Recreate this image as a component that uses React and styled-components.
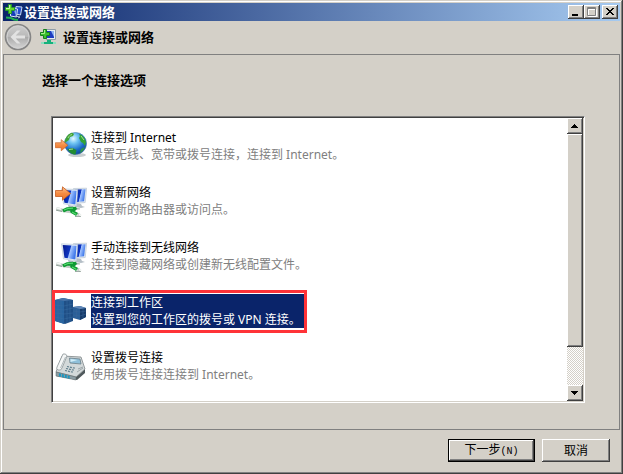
import {useState} from 'react'
import styled, {createGlobalStyle, css} from 'styled-components'

const colors = {
    face: '#d4d0c8',
    shadow: '#808080',
    darkShadow: '#404040',
    navy: '#0a246a',
    titleEnd: '#a6caf0',
    mark: '#ff3338',
}

const GlobalStyle = createGlobalStyle`
  * {
    box-sizing: border-box;
  }

  body {
    margin: 0;
    background: ${colors.face};
    color: #000000;
    font-family: "Noto Sans", "Noto Sans CJK SC", sans-serif;
    font-size: 12px;
  }

  button {
    font: inherit;
    color: inherit;
    margin: 0;
    padding: 0;
    border: 0;
  }

  svg {
    display: block;
    flex: none;
  }
`

const raised = css`
  background: ${colors.face};
  box-shadow: inset -1px -1px ${colors.darkShadow}, inset 1px 1px #ffffff,
    inset -2px -2px ${colors.shadow};
`

const WindowFrame = styled.main`
  display: flex;
  flex-direction: column;
  min-height: 100vh;
  padding: 3px;
  background: ${colors.face};
  box-shadow: inset -1px -1px ${colors.darkShadow}, inset 1px 1px ${colors.face},
    inset -2px -2px ${colors.shadow}, inset 2px 2px #ffffff;
`

const TitleBar = styled.header`
  display: flex;
  align-items: center;
  height: 18px;
  padding: 0 2px;
  background: linear-gradient(to right, ${colors.navy}, ${colors.titleEnd});
`

const TitleText = styled.h1`
  flex: 1;
  margin: 0 0 0 1px;
  color: #ffffff;
  font-size: 13px;
  line-height: 18px;
`

const CaptionButton = styled.button`
  ${raised}
  width: 16px;
  height: 14px;
  margin-left: ${({$spaced}) => ($spaced ? '2px' : '0')};
`

const WizardHeader = styled.div`
  display: flex;
  align-items: center;
  height: 33px;
  padding: 0 2px 2px 1px;
`

const BackButton = styled.button`
  background: transparent;
  margin-right: 8px;
`

const WizardTitle = styled.h2`
  margin: 0 0 0 6px;
  font-size: 13px;
  line-height: 18px;
`

const Content = styled.section`
  flex: 1;
  border: 1px solid ${colors.shadow};
  padding: 16px 34px 26px 38px;
`

const Question = styled.h3`
  margin: 0 0 27px;
  font-size: 13px;
  line-height: 18px;
`

const ListBox = styled.div`
  display: flex;
  margin-left: 9px;
  background: #ffffff;
  border: 1px solid;
  border-color: ${colors.shadow} #ffffff #ffffff ${colors.shadow};
  padding: 1px;
  box-shadow: inset 1px 1px ${colors.darkShadow}, inset -1px -1px ${colors.face};
`

const Options = styled.ul`
  flex: 1;
  display: flex;
  flex-direction: column;
  align-items: flex-start;
  gap: 21px;
  margin: 0;
  padding: 11px 2px 18px;
  list-style: none;
`

const Option = styled.button`
  position: relative;
  display: flex;
  align-items: center;
  gap: 4px;
  background: transparent;
  text-align: left;
  line-height: 17px;

  ${({$selected}) => $selected && css`
    &::after {
      content: '';
      position: absolute;
      inset: -4px -3px -5px;
      border: 3px solid ${colors.mark};
      pointer-events: none;
    }
  `}
`

const OptionText = styled.span`
  display: block;
  padding-right: 3px;
  background: ${({$selected}) => ($selected ? colors.navy : 'transparent')};
  color: ${({$selected}) => ($selected ? '#ffffff' : '#000000')};
`

const OptionTitle = styled.span`
  display: block;
`

const OptionDetail = styled.span`
  display: block;
  color: ${({$selected}) => ($selected ? '#ffffff' : '#808080')};
`

const ScrollBar = styled.div`
  display: flex;
  flex-direction: column;
  width: 16px;
  background: repeating-conic-gradient(${colors.face} 0 25%, #ffffff 0 50%) 0 0 / 2px 2px;
`

const ScrollButton = styled.button`
  ${raised}
  height: 16px;
`

const ScrollThumb = styled.div`
  ${raised}
  flex: 213;
`

const ScrollTrack = styled.div`
  flex: 38;
`

const Footer = styled.footer`
  display: flex;
  justify-content: flex-end;
  gap: 7px;
  padding: 9px 10px;
`

const DialogButton = styled.button`
  ${raised}
  width: ${({$primary}) => ($primary ? '87px' : '68px')};
  height: 23px;
  line-height: 20px;
  border: ${({$primary}) => ($primary ? '1px solid #000000' : '0')};
`

const AccessKey = styled.span`
  font-family: "Liberation Mono", monospace;
  font-size: 10px;
`

function WizardIcon() {
    return (
        <svg width="17" height="17" viewBox="0 0 17 17" aria-hidden="true">
            <path d="M5.500 1.500h10v10h-9z" fill="#e6edf1" stroke="#8d9ca8"/>
            <path d="M7 3h7v7H7z" fill="#1c3cc0"/>
            <path d="M11 3h3v6z" fill="#8eb5f4"/>
            <path d="M7 12h4v2h5v2H1v-2h6z" fill="#17b17c"/>
            <path d="M1 15h3M13 15h3" stroke="#8be0c0" strokeWidth="2"/>
            <path d="M3.500 1.500h3v3h3v3h-3v3h-3v-3h-3v-3h3z" fill="#3fc232" stroke="#16821c"/>
            <path d="M4.500 2v3.500H1" fill="none" stroke="#a8f08c"/>
        </svg>
    )
}

function TitleIcon() {
    return (
        <svg width="18" height="17" viewBox="0 0 18 17" aria-hidden="true">
            <path d="M11 2.500l6 .5-1.500 8-5-1z" fill="#234bce" stroke="#c7dcf2"/>
            <path d="M5.500 4l7 1-1 8-6-1z" fill="#153bb9" stroke="#d9e7f5"/>
            <path d="M9 6l2.500.5-1 5z" fill="#7da8ee"/>
            <path d="M10 12l5 1-2 1" fill="none" stroke="#b5c2d0"/>
            <path d="M1 13.500l5 .5 3 1.500 4 .5" fill="none" stroke="#20b052" strokeWidth="2"/>
            <path d="M3.500.5h3v3h3v3h-3v3h-3v-3h-3v-3h3z" fill="#65d82d" stroke="#24982b"/>
            <path d="M4.500 1v3.500H1" fill="none" stroke="#c4f7a4"/>
        </svg>
    )
}

function BackIcon() {
    return (
        <svg width="28" height="28" viewBox="0 0 28 28" aria-hidden="true">
            <defs>
                <linearGradient id="backFill" x2="0" y2="1">
                    <stop stopColor="#cfcfcf"/>
                    <stop offset=".5" stopColor="#b8b8b8"/>
                    <stop offset=".51" stopColor="#aaaaaa"/>
                    <stop offset="1" stopColor="#d8d8d8"/>
                </linearGradient>
            </defs>
            <circle cx="14" cy="14" r="12.500" fill="url(#backFill)" stroke="#858585" strokeWidth="1.600"/>
            <circle cx="14" cy="14" r="11" fill="none" stroke="#d2d2d2"/>
            <path d="M6.500 14l6.500-6.500h3.500l-4.800 5H21v3h-9.300l4.800 5H13z" fill="#e2e2e2"/>
        </svg>
    )
}

function Arrow({y = 0}) {
    return (
        <path
            transform={`translate(0 ${y})`}
            d="M.5 4.500h7V.8l8 6.700-8 6.700v-3.700h-7z"
            fill="url(#arrowFill)"
            stroke="#c65c20"
            strokeWidth=".8"
        />
    )
}

function SharedGradients() {
    return (
        <svg width="0" height="0" style={{position: 'absolute'}} aria-hidden="true">
            <defs>
                <linearGradient id="arrowFill" x2="0" y2="1">
                    <stop stopColor="#ffc48e"/>
                    <stop offset=".5" stopColor="#f58b42"/>
                    <stop offset="1" stopColor="#ee7427"/>
                </linearGradient>
                <linearGradient id="screenFill" x2="1" y2=".3">
                    <stop stopColor="#06188c"/>
                    <stop offset=".55" stopColor="#0d35c0"/>
                    <stop offset=".62" stopColor="#a3c4ff"/>
                    <stop offset="1" stopColor="#3f78ea"/>
                </linearGradient>
                <radialGradient id="oceanFill" cx=".4" cy=".28" r=".75">
                    <stop stopColor="#e4f9ff"/>
                    <stop offset=".3" stopColor="#6fc3f2"/>
                    <stop offset=".7" stopColor="#1b6cc8"/>
                    <stop offset="1" stopColor="#134596"/>
                </radialGradient>
            </defs>
        </svg>
    )
}

function GlobeIcon() {
    return (
        <svg width="32" height="32" viewBox="0 0 32 32" aria-hidden="true">
            <ellipse cx="22" cy="25" rx="9" ry="2" fill="#c9ced0"/>
            <circle cx="20.500" cy="13.500" r="11" fill="url(#oceanFill)" stroke="#4178a8" strokeWidth=".6"/>
            <path d="M11 8c1-2.500 3-4.500 6-5.200l2 1.200-1 2-3 1-1 3-3 2-1.500 1c0-2 .5-3.500 1.500-5z" fill="#43a334"/>
            <path d="M24 4c4 1 6 4 7 8l-1 4-2-3-2-1-2-4 1-2z" fill="#31a335"/>
            <path d="M12.500 19l5-1 4 2-1 4.500c-3 0-6.500-2-8-5.500z" fill="#228c32"/>
            <path d="M26 19l4-2c-1 3-3 5-5 6z" fill="#2d9947"/>
            <path d="M13 8c1-2 2-3 4-3.500M26 6l3 4M14 19.500l4-.5" fill="none" stroke="#a4de8b"/>
            <g transform="translate(0 9) scale(.83)"><Arrow/></g>
        </svg>
    )
}

function Monitors() {
    return (
        <>
            <path d="M21 18l5 1 1 2 3 1-4 1-6-1z" fill="#b4bec6"/>
            <path d="M18.500 3.500l13.200-.3-1.500 14.300-10.500 1z" fill="#e3eaf1" stroke="#bac5d3" strokeWidth=".7"/>
            <path d="M20 4.500l10.500-.2-1.400 12-8.200.9z" fill="url(#screenFill)"/>
            <path d="M13 20l5 1 1 2 5 1-6 1.500-7-1.500 3-1z" fill="#a8b4bc"/>
            <path d="M6.500 3.800l16.200.8-1.200 16.200-13-2z" fill="#ecf2f8" stroke="#b9c8d8" strokeWidth=".7"/>
            <path d="M7.700 4.900l13.800.8-1.100 13.700-11-1.700z" fill="url(#screenFill)"/>
        </>
    )
}

function Cable() {
    return (
        <>
            <path d="M12 27c5-3 9-4 13-3" fill="none" stroke="#9eb4a7" strokeWidth="1.200"/>
            <path d="M1.500 23.500l9 2.500 7 1 8 3.500" fill="none" stroke="#c3ccc7" strokeWidth="3"/>
            <path d="M1 25.200l6 1.300M20 31.500l6 .2" stroke="#7e8f87" strokeWidth=".8"/>
            <path d="M8 26l4-2 8-.5-3 3 5 3" fill="none" stroke="#0f9a33" strokeWidth="3.600" strokeLinejoin="round"/>
            <path d="M9 25l4-1.500 5-.3M17 27l4.500 2.500" fill="none" stroke="#58dc70" strokeWidth="1.200"/>
            <path d="M2 23l4 1.200M24 29.500l2.500 1" stroke="#f4f7f5" strokeWidth="1.600"/>
        </>
    )
}

function NewNetworkIcon() {
    return (
        <svg width="32" height="32" viewBox="0 0 32 32" aria-hidden="true">
            <Monitors/>
            <Cable/>
            <Arrow y={1}/>
        </svg>
    )
}

function WirelessIcon() {
    return (
        <svg width="32" height="32" viewBox="0 0 32 32" aria-hidden="true">
            <Monitors/>
            <Cable/>
        </svg>
    )
}

function WorkplaceIcon() {
    return (
        <svg width="32" height="32" viewBox="0 0 32 32" aria-hidden="true">
            <path d="M0 5l8-2 10 2v21l-8 3-10-3z" fill="#1f4f86"/>
            <path d="M0 5l9 1v23l-9-3z" fill="#2864a0"/>
            <path d="M0 5l8-2 10 2-9 1z" fill="#4775aa"/>
            <path d="M0 10l9 1 9-2M0 14l9 1 9-2M0 18l9 1 9-1M0 22l9 2 9-2M3 6v21M6 6v22M12 6v22M15 6v21" fill="none" stroke="#3a6ca2" strokeWidth=".5"/>
            <path d="M18 12l7-1 6 2v9l-6 3-7-2z" fill="#2a5f98"/>
            <path d="M25 14l6-1v9l-6 3z" fill="#173c6a"/>
            <path d="M18 12l7-1 6 2-6 1z" fill="#6187b7"/>
            <path d="M18 16l7 1 6-1M18 20l7 1 6-2M21.500 14v9M28 14v9" fill="none" stroke="#3a6798" strokeWidth=".5"/>
        </svg>
    )
}

function PhoneIcon() {
    return (
        <svg width="32" height="32" viewBox="0 0 32 32" aria-hidden="true">
            <path d="M1 22l20 5 9-8v4l-8 7-21-4z" fill="#50595c"/>
            <path d="M7 6l19 1 4 12-9 8-20-5z" fill="#d3d9da" stroke="#7d8588" strokeWidth=".8"/>
            <path d="M1 22l20 5v3L1 26z" fill="#8b9ca3" stroke="#5e686b" strokeWidth=".5"/>
            <path d="M4 24l11 2.700M4 25.500l11 2.700" stroke="#1697c3" strokeWidth="1.500" strokeDasharray="2 1"/>
            <path d="M14.500 8l10.500 1 1 5-11-1z" fill="#8fc0da" stroke="#6c7f88" strokeWidth=".8"/>
            <path d="M15.500 9l7 1-7 2z" fill="#d1edf8"/>
            <path d="M12 16.500l8 1.700M11 18.500l8 1.700M10 20.500l8 1.700" stroke="#62808e" strokeWidth="1.200" strokeDasharray="2 1"/>
            <path d="M8 4q3-1 4 2L7 18q-1 3-4 2-2-1-1-3z" fill="#f4f6f6" stroke="#8b9497" strokeWidth=".8"/>
            <path d="M10.500 7L5.500 18" stroke="#b2bbbe"/>
            <path d="M23 19l5-2M22 22l6-4" stroke="#9da6a9"/>
        </svg>
    )
}

const options = [
    {id: 'internet', icon: GlobeIcon, title: '连接到 Internet', detail: '设置无线、宽带或拨号连接，连接到 Internet。'},
    {id: 'network', icon: NewNetworkIcon, title: '设置新网络', detail: '配置新的路由器或访问点。'},
    {id: 'wireless', icon: WirelessIcon, title: '手动连接到无线网络', detail: '连接到隐藏网络或创建新无线配置文件。'},
    {id: 'workplace', icon: WorkplaceIcon, title: '连接到工作区', detail: '设置到您的工作区的拨号或 VPN 连接。'},
    {id: 'dialup', icon: PhoneIcon, title: '设置拨号连接', detail: '使用拨号连接连接到 Internet。'},
]

function App() {
    const [selected, setSelected] = useState('workplace')

    return (
        <WindowFrame>
            <GlobalStyle/>
            <SharedGradients/>
            <TitleBar>
                <TitleIcon/>
                <TitleText>设置连接或网络</TitleText>
                <CaptionButton aria-label="最小化">
                    <svg width="16" height="14" aria-hidden="true">
                        <path d="M4 9h6v2H4z"/>
                    </svg>
                </CaptionButton>
                <CaptionButton aria-label="最大化" disabled>
                    <svg width="16" height="14" aria-hidden="true">
                        <path d="M4.500 4.500h8v7h-8z" fill="none" stroke="#ffffff"/>
                        <path d="M3.500 2.500h8v8h-8zM3 3.500h9" fill="none" stroke="#808080"/>
                    </svg>
                </CaptionButton>
                <CaptionButton aria-label="关闭" $spaced>
                    <svg width="16" height="14" aria-hidden="true">
                        <path d="M4 3h2v1h1v1h2V4h1V3h2v1h-1v1h-1v1H9v1h1v1h1v1h1v1h-2V9H9V8H7v1H6v1H4V9h1V8h1V7h1V6H6V5H5V4H4z"/>
                    </svg>
                </CaptionButton>
            </TitleBar>
            <WizardHeader>
                <BackButton aria-label="后退">
                    <BackIcon/>
                </BackButton>
                <WizardIcon/>
                <WizardTitle>设置连接或网络</WizardTitle>
            </WizardHeader>
            <Content>
                <Question>选择一个连接选项</Question>
                <ListBox>
                    <Options>
                        {options.map(({id, icon: Icon, title, detail}) => (
                            <li key={id}>
                                <Option
                                    $selected={id === selected}
                                    aria-pressed={id === selected}
                                    onClick={() => setSelected(id)}
                                >
                                    <Icon/>
                                    <OptionText $selected={id === selected}>
                                        <OptionTitle>{title}</OptionTitle>
                                        <OptionDetail $selected={id === selected}>{detail}</OptionDetail>
                                    </OptionText>
                                </Option>
                            </li>
                        ))}
                    </Options>
                    <ScrollBar>
                        <ScrollButton aria-label="向上滚动">
                            <svg width="16" height="16" aria-hidden="true">
                                <path d="M7 6h1v1h1v1h1v1h1v1H4V9h1V8h1V7h1z"/>
                            </svg>
                        </ScrollButton>
                        <ScrollThumb/>
                        <ScrollTrack/>
                        <ScrollButton aria-label="向下滚动">
                            <svg width="16" height="16" aria-hidden="true">
                                <path d="M4 6h7v1h-1v1H9v1H8v1H7V9H6V8H5V7H4z"/>
                            </svg>
                        </ScrollButton>
                    </ScrollBar>
                </ListBox>
            </Content>
            <Footer>
                <DialogButton $primary>下一步<AccessKey>(N)</AccessKey></DialogButton>
                <DialogButton>取消</DialogButton>
            </Footer>
        </WindowFrame>
    )
}

export default App
